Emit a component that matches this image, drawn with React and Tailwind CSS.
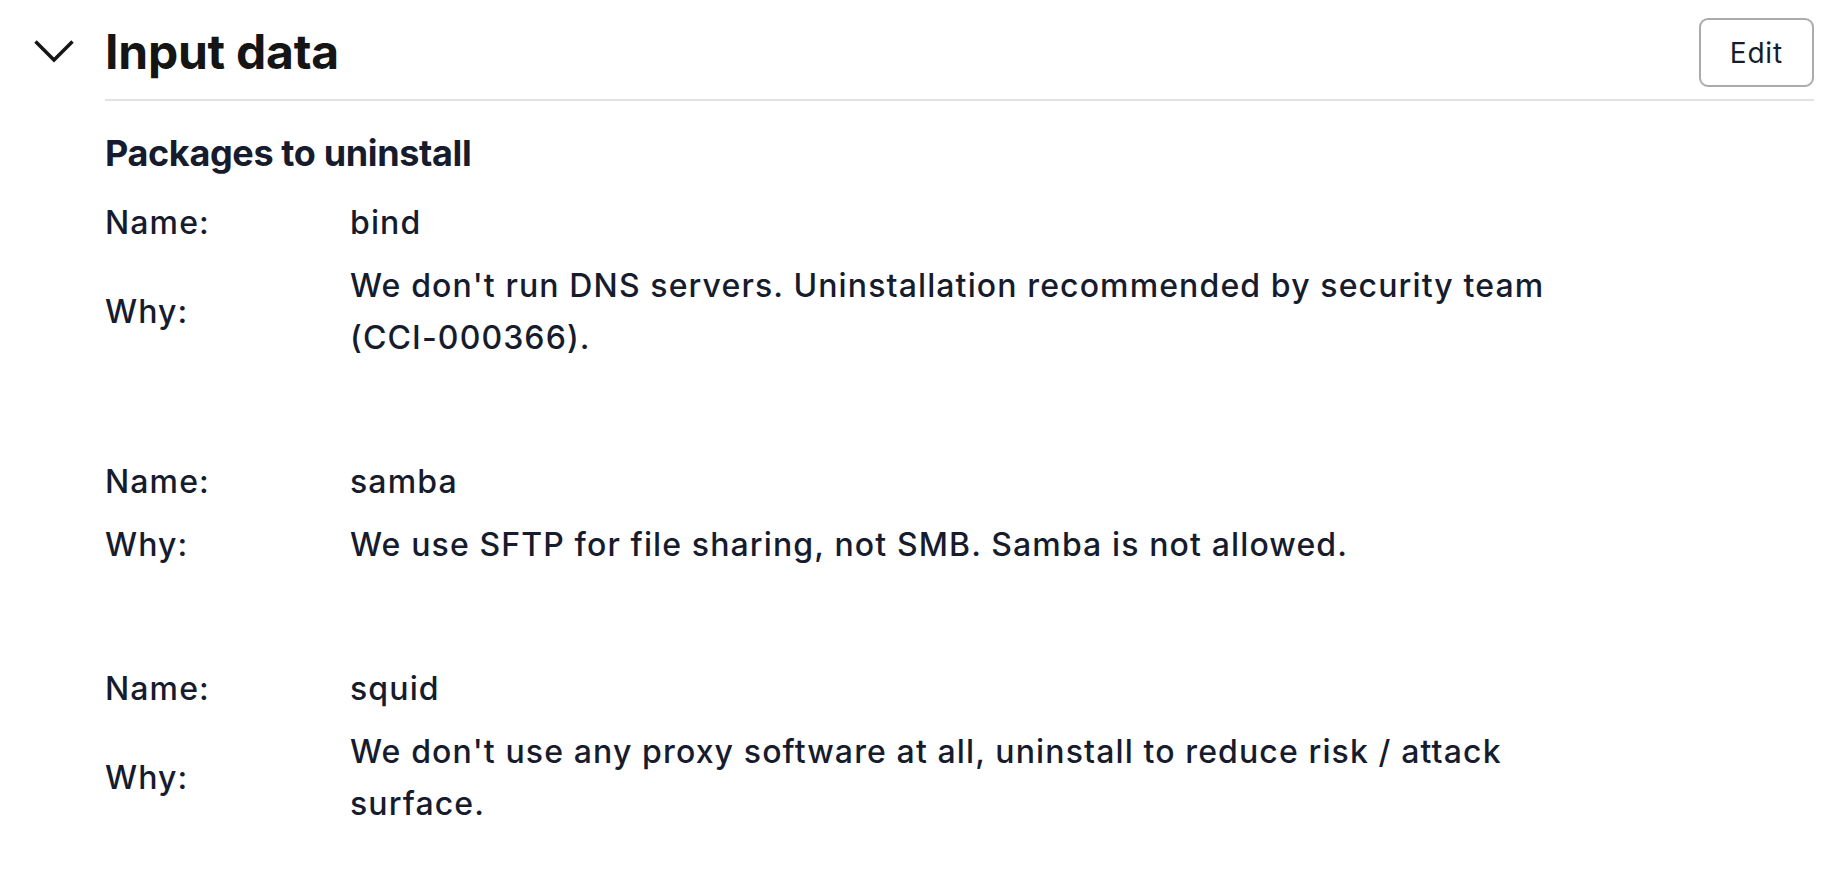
import React from "react";

const packages = [
  {
    name: "bind",
    why: "We don't run DNS servers. Uninstallation recommended by security team (CCI-000366).",
  },
  {
    name: "samba",
    why: "We use SFTP for file sharing, not SMB. Samba is not allowed.",
  },
  {
    name: "squid",
    why: "We don't use any proxy software at all, uninstall to reduce risk / attack surface.",
  },
];

function Chevron() {
  return (
    <svg width="40" height="23" viewBox="0 0 40 23" fill="none" stroke="#151515" strokeWidth="3.5" strokeLinejoin="miter">
      <polyline points="1.5,1.5 20,20 38.5,1.5" />
    </svg>
  );
}

export default function App() {
  return (
    <div className="w-full h-[872px] bg-white font-[Inter,sans-serif] text-[#161c2d] flex">
      {/* toggle column */}
      <div className="w-[105px] shrink-0 pl-[34px] pt-[40px]">
        <Chevron />
      </div>

      {/* section body */}
      <div className="flex-1 mr-[18px]">
        <div className="flex items-center justify-between pt-[18px] pb-3 border-b-2 border-[#e3e3e3]">
          <h2 className="text-[48px] leading-[56px] font-bold text-[#151515] -tracking-[0.005em] mt-[-2px]">
            Input data
          </h2>
          <button className="h-[69px] px-[29px] border-2 border-[#ababab] rounded-[9px] text-[28px] tracking-[0.03em] text-[#161c2d] bg-white">
            Edit
          </button>
        </div>

        <h3 className="mt-[30px] text-[36px] leading-[44px] font-bold -tracking-[0.01em]">
          Packages to uninstall
        </h3>

        <div className="mt-[22px] flex flex-col gap-[92px] text-[32px] leading-[52px] font-medium tracking-[0.035em]">
          {packages.map((p) => (
            <div key={p.name} className="grid grid-cols-[245px_1240px] gap-y-[11px]">
              <div className="self-center">Name:</div>
              <div>{p.name}</div>
              <div className="self-center">Why:</div>
              <div>{p.why}</div>
            </div>
          ))}
        </div>
      </div>
    </div>
  );
}
